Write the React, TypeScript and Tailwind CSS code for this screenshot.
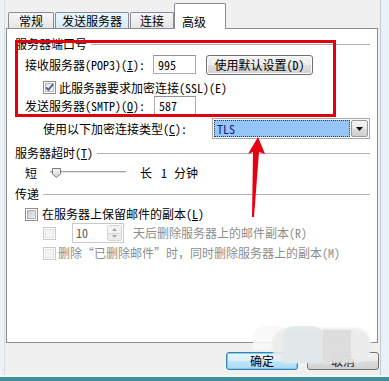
import React from "react";

const F = "[font-family:'Noto_Sans_Mono_CJK_SC','Noto_Sans_CJK_SC',sans-serif]";

function Check({ checked = false, disabled = false }: { checked?: boolean; disabled?: boolean }) {
  return (
    <div
      className={`w-[13px] h-[13px] shrink-0 border p-[1px] bg-white ${
        disabled ? "border-[#cacaca]" : "border-[#8e8f8f]"
      }`}
    >
      <div
        className={`w-full h-full relative border ${
          disabled
            ? "border-[#e2e2e2] bg-[#f5f5f5]"
            : checked
            ? "border-[#b8bcc2] bg-[linear-gradient(135deg,#e2e4e7,#fbfbfb)]"
            : "border-[#adb2b8] bg-[linear-gradient(135deg,#c6cad0,#eff0f1)]"
        }`}
      >
        {checked && (
          <svg className="absolute -left-[1px] -top-[1px]" width="9" height="9" viewBox="0 0 9 9">
            <path d="M1 4.3 L3.4 6.8 L8 1.2" fill="none" stroke="#4b5f8c" strokeWidth="1.8" />
          </svg>
        )}
      </div>
    </div>
  );
}

function TextBox({ value, w }: { value: string; w: string }) {
  return (
    <div
      className={`${w} h-[19px] border border-[#abadb3] border-t-[#8f9299] bg-white flex items-center pl-[4px] text-[12px] text-black`}
    >
      {value}
    </div>
  );
}

function GroupHeader({ children }: { children: React.ReactNode }) {
  return (
    <div className="h-[14px] flex items-center pl-[8px] pr-[7px]">
      <span className="leading-[14px] whitespace-nowrap">{children}</span>
      <div className="flex-1 h-px bg-[#b3b3b3] ml-[4px]" />
    </div>
  );
}

export default function App() {
  return (
    <div className={`relative w-[389px] h-[381px] overflow-hidden bg-[#f0f0f0] flex flex-col text-[12px] text-black ${F}`}>
      <div className="flex-1 flex min-h-0">
        {/* left frame */}
        <div className="w-[5px] bg-[#eef2f5] border-r border-[#d6dbe0]" />
        {/* main */}
        <div className="w-[375px] flex flex-col pt-[3px]">
          {/* tabs */}
          <div className="h-[25px] flex items-end pl-[3px] relative z-10">
            <div className="w-[46px] h-[16px] border border-b-0 border-[#898c95] rounded-t-[2px] bg-[linear-gradient(#f6f6f6,#e6e6e6)] flex items-center justify-center leading-[14px] pt-[1px]">
              常规
            </div>
            <div className="ml-[1px] w-[74px] h-[16px] border border-b-0 border-[#898c95] rounded-t-[2px] bg-[linear-gradient(#eaf6fd,#d4ebfa)] flex items-center justify-center leading-[14px] pt-[1px]">
              发送服务器
            </div>
            <div className="ml-[1px] w-[44px] h-[16px] border border-b-0 border-[#898c95] rounded-t-[2px] bg-[linear-gradient(#f6f6f6,#e6e6e6)] flex items-center justify-center leading-[14px] pt-[1px]">
              连接
            </div>
            <div className="w-[52px] h-[26px] -mb-[1px] border border-b-0 border-[#898c95] rounded-t-[2px] bg-white pl-[7px] pt-[11px] leading-[14px]">
              高级
            </div>
          </div>

          {/* panel */}
          <div className="ml-[1px] w-[372px] h-[315px] border border-[#898c95] bg-white flex flex-col pt-[8px]">
            <GroupHeader>服务器端口号</GroupHeader>

            <div className="mt-[4px] h-[19px] flex items-center pl-[18px]">
              <span className="w-[128px] whitespace-nowrap leading-[14px]">
                接收服务器(POP3)(<u>I</u>):
              </span>
              <TextBox value="995" w="w-[43px]" />
              <div className="ml-[10px] w-[107px] h-[20px] rounded-[3px] border border-[#707070] bg-[linear-gradient(#f4f4f4_0%,#ececec_48%,#dfdfdf_52%,#d2d2d2_100%)] shadow-[inset_0_0_0_1px_#fbfbfb] flex items-center justify-center whitespace-nowrap leading-[14px]">
                使用默认设置(D)
              </div>
            </div>

            <div className="mt-[7px] h-[13px] flex items-center pl-[36px]">
              <Check checked />
              <span className="ml-[3px] whitespace-nowrap leading-[14px]">此服务器要求加密连接(SSL)(E)</span>
            </div>

            <div className="mt-[2px] h-[19px] flex items-center pl-[18px]">
              <span className="w-[129px] whitespace-nowrap leading-[14px]">
                发送服务器(SMTP)(<u>O</u>):
              </span>
              <TextBox value="587" w="w-[42px]" />
            </div>

            <div className="mt-[3px] h-[21px] flex items-center pl-[36px]">
              <span className="w-[169px] whitespace-nowrap leading-[14px]">
                使用以下加密连接类型(<u>C</u>):
              </span>
              <div className="w-[158px] h-[21px] border border-[#a9a9a9] bg-white flex items-center p-[1px]">
                <div className="flex-1 h-full bg-[#96c5f8] border border-dotted border-[#3a3a3a] flex items-center pl-[2px] text-[#1a2370] leading-[14px]">
                  TLS
                </div>
                <div className="ml-[1px] w-[17px] h-full border border-[#9a9a9a] rounded-[2px] bg-[linear-gradient(#f3f3f3_0%,#ebebeb_48%,#dcdcdc_52%,#cfcfcf_100%)] flex items-center justify-center">
                  <svg width="7" height="4" viewBox="0 0 7 4">
                    <path d="M0 0 H7 L3.5 4 Z" fill="#111" />
                  </svg>
                </div>
              </div>
            </div>

            <div className="mt-[7px]">
              <GroupHeader>
                服务器超时(<u>T</u>)
              </GroupHeader>
            </div>

            <div className="mt-[6px] h-[14px] flex items-center pl-[18px]">
              <span className="leading-[14px]">短</span>
              <div className="ml-[13px] w-[76px] h-[14px] relative">
                <div className="absolute left-0 right-0 top-[5px] h-[3px] border-t border-[#a0a0a0] border-b border-b-white bg-[#e3e3e3]" />
                <svg className="absolute left-[1px] top-[2px]" width="11" height="10" viewBox="0 0 11 10">
                  <defs>
                    <linearGradient id="th" x1="0" y1="0" x2="0" y2="1">
                      <stop offset="0" stopColor="#f6f6f6" />
                      <stop offset="1" stopColor="#d3d3d3" />
                    </linearGradient>
                  </defs>
                  <path d="M1.5 0.5 H9.5 V6 L5.5 9.5 L1.5 6 Z" fill="url(#th)" stroke="#7a7a7a" />
                </svg>
              </div>
              <span className="ml-[14px] leading-[14px]">长</span>
              <span className="ml-[9px] leading-[14px]">1</span>
              <span className="ml-[7px] leading-[14px]">分钟</span>
            </div>

            <div className="mt-[7px]">
              <GroupHeader>传递</GroupHeader>
            </div>

            <div className="mt-[6px] h-[14px] flex items-center pl-[18px]">
              <Check />
              <span className="ml-[4px] whitespace-nowrap leading-[14px]">
                在服务器上保留邮件的副本(<u>L</u>)
              </span>
            </div>

            <div className="mt-[2px] h-[20px] flex items-center pl-[36px]">
              <Check disabled />
              <div className="ml-[16px] w-[52px] h-[20px] border border-[#c9c9c9] bg-white flex items-center">
                <span className="flex-1 pl-[3px] text-[#5c5c5c] leading-[14px]">10</span>
                <div className="w-[15px] h-[16px] mr-[1px] flex flex-col border border-[#d6d6d6] rounded-[2px]">
                  <div className="flex-1 bg-[#f4f4f4] border-b border-[#d6d6d6] flex items-center justify-center">
                    <svg width="5" height="3" viewBox="0 0 5 3">
                      <path d="M0 3 H5 L2.5 0 Z" fill="#a8a8a8" />
                    </svg>
                  </div>
                  <div className="flex-1 bg-[#ececec] flex items-center justify-center">
                    <svg width="5" height="3" viewBox="0 0 5 3">
                      <path d="M0 0 H5 L2.5 3 Z" fill="#a8a8a8" />
                    </svg>
                  </div>
                </div>
              </div>
              <span className="ml-[9px] whitespace-nowrap text-[#8d8d8d] leading-[14px]">
                天后删除服务器上的邮件副本(R)
              </span>
            </div>

            <div className="mt-[3px] h-[14px] flex items-center pl-[36px]">
              <Check disabled />
              <span className="ml-[2px] whitespace-nowrap text-[#8d8d8d] leading-[14px]">
                删除“已删除邮件”时，同时删除服务器上的副本(M)
              </span>
            </div>
          </div>

          {/* buttons */}
          <div className="mt-[9px] ml-[1px] w-[373px] h-[18px] flex justify-end gap-[9px]">
            <div className="w-[72px] h-[18px] rounded-[3px] border border-[#3c7fb1] bg-[linear-gradient(#eaf6fd_0%,#d9f0fc_48%,#bee6fd_52%,#a7d9f5_100%)] shadow-[inset_0_0_0_1px_#7ad0f2] flex items-center justify-center leading-[14px]">
              确定
            </div>
            <div className="w-[72px] h-[18px] rounded-[3px] border border-[#707070] bg-[linear-gradient(#f2f2f2_0%,#ebebeb_48%,#dddddd_52%,#cfcfcf_100%)] flex items-center justify-center leading-[14px]">
              取消
            </div>
          </div>
        </div>
        {/* right frame */}
        <div className="w-[9px] bg-[#eaf1f6] border-l border-[#c3cad1]" />
      </div>
      <div className="h-[2px] bg-[#f4f7f8]" />
      <div className="h-[4px] bg-[#3f8f9b]" />

      {/* watermark blur */}
      <div className="absolute left-[253px] top-[326px] w-[30px] h-[24px] rounded-tl-[12px] bg-[#f8f8f8] opacity-90" />
      <div className="absolute left-[272px] top-[328px] w-[99px] h-[35px] rounded-[16px] bg-[#ebebeb] opacity-90 blur-[1px]" />
      <div className="absolute left-[283px] top-[326px] w-[40px] h-[37px] rounded-t-[10px] bg-[#e1e7ea] opacity-85" />
      <div className="absolute left-[323px] top-[330px] w-[28px] h-[32px] bg-[#dadada] opacity-85" />
      <div className="absolute left-[351px] top-[333px] w-[20px] h-[26px] rounded-r-[13px] bg-[#ececec] opacity-85" />

      {/* annotation: red rectangle */}
      <div className="absolute left-[15px] top-[40px] w-[321px] h-[77px] border-[3px] border-[#e2000f]" />
      {/* annotation: red arrow */}
      <svg className="absolute left-0 top-0 pointer-events-none" width="389" height="381" viewBox="0 0 389 381">
        <path d="M258 137 L265 154 L259 152 L254 217 L252 217 L253 152 L248 154 Z" fill="#e60012" />
      </svg>
    </div>
  );
}
